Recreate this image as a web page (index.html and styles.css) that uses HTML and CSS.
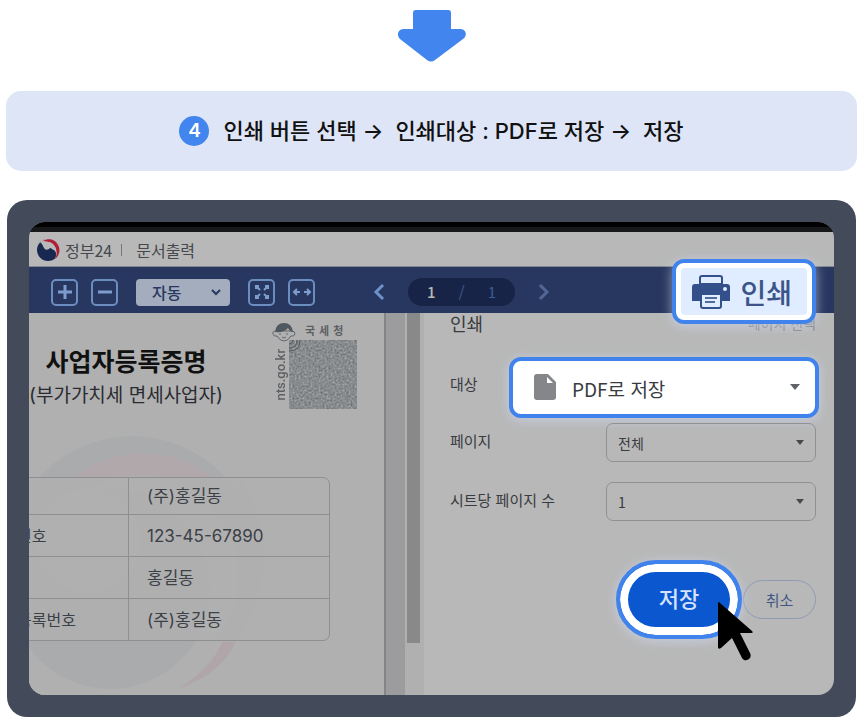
FILE: index.html
```html
<!DOCTYPE html>
<html lang="ko">
<head>
    <meta charset="UTF-8">
    <meta name="viewport" content="width=device-width, initial-scale=1.0">
    <title>정부24 문서출력 안내</title>
    <link rel="stylesheet" href="styles.css">
</head>
<body>
    <main class="guide">
        <svg class="down-arrow" width="68" height="52" viewBox="0 0 68 52" aria-hidden="true">
            <path d="M18 0h32q3 0 3 3v16h9c6 0 8 6 3 10L37 50q-4 3-8 0L2 29c-4-4-2-10 4-10h9V3q0-3 3-3z" fill="#4285ee"/>
        </svg>

        <!-- Step banner -->
        <div class="step">
            <span class="step-number">4</span>
            <p class="step-text">인쇄 버튼 선택 <span class="step-arrow">→</span> 인쇄대상 : PDF로 저장 <span class="step-arrow">→</span> 저장</p>
        </div>

        <div class="frame">
            <div class="screen">
                <div class="screen-bar"></div>
                <header class="site-header">
                    <svg width="24" height="24" viewBox="0 0 24 24" aria-hidden="true">
                        <circle cx="12" cy="12" r="11" fill="#182850"/>
                        <path d="M4 4C9-1 17 0 21 5c4 5 3 12-2 16 2-4 1-8-3-10-4-3-8-2-10-5z" fill="#b8b8b8"/>
                        <path d="M7 3c6-4 13-1 15 4 3 5 1 11-3 14 3-6 2-11-3-15-3-2-6-3-9-3z" fill="#b01d34"/>
                        <path d="M6 6c3-3 8-3 11 0 2 2 3 4 3 6-2-3-5-3-7-1-2 1-4 1-5-1-1-1-1-3-2-4z" fill="#b8b8b8"/>
                        <path d="M8 15c3 1 5-1 7-3 2-1 4 0 5 3-1 4-4 7-8 7z" fill="#182850"/>
                    </svg>
                    <span class="site-name">정부24</span>
                    <span class="site-divider"></span>
                    <span class="site-page">문서출력</span>
                </header>

                <!-- Viewer toolbar -->
                <div class="toolbar">
                    <button class="tool" aria-label="확대">
                        <svg width="26" height="26" viewBox="0 0 26 26"><path d="M13 6v14M6 13h14"/></svg>
                    </button>
                    <button class="tool" aria-label="축소">
                        <svg width="26" height="26" viewBox="0 0 26 26"><path d="M6 13h14"/></svg>
                    </button>
                    <div class="zoom">
                        <select class="zoom-select" aria-label="배율">
                            <option>자동</option>
                        </select>
                        <svg class="zoom-arrow" width="10" height="7" viewBox="0 0 10 7"><path d="M1 1l4 4 4-4" fill="none" stroke="#28375f" stroke-width="2"/></svg>
                    </div>
                    <button class="tool" aria-label="전체 화면">
                        <svg class="thin" width="26" height="26" viewBox="0 0 26 26"><path d="M7 10V7h3M7 7l4 4M16 7h3v3M19 7l-4 4M7 16v3h3M7 19l4-4M16 19h3v-3M19 19l-4-4"/></svg>
                    </button>
                    <button class="tool" aria-label="너비 맞춤">
                        <svg class="thin" width="26" height="26" viewBox="0 0 26 26"><path d="M8 10l-3 3 3 3M5 13h6M18 10l3 3-3 3M21 13h-6"/></svg>
                    </button>
                    <div class="pager">
                        <button class="pager-button" aria-label="이전 페이지">
                            <svg width="14" height="18" viewBox="0 0 14 18"><path d="M11 2L4 9l7 7" fill="none" stroke="#6d92c9" stroke-width="3"/></svg>
                        </button>
                        <div class="pager-pages"><b>1</b><span>/</span><span>1</span></div>
                        <button class="pager-button" aria-label="다음 페이지">
                            <svg width="14" height="18" viewBox="0 0 14 18"><path d="M3 2l7 7-7 7" fill="none" stroke="#526795" stroke-width="3"/></svg>
                        </button>
                    </div>
                    <button class="print-button">
                        <span class="print-inner">
                            <svg width="38" height="34" viewBox="0 0 38 34" aria-hidden="true">
                                <path d="M3 9h32q3 0 3 3v14H0V12q0-3 3-3z" fill="#34508a"/>
                                <path d="M8 9V3q0-2 2-2h18q2 0 2 2v6z" fill="#e0ecff" stroke="#34508a" stroke-width="2"/>
                                <path d="M9 19h20v12q0 2-2 2H11q-2 0-2-2z" fill="#e0ecff" stroke="#34508a" stroke-width="2"/>
                                <path d="M13 23h12M13 27h10" stroke="#526a9d" stroke-width="2"/>
                                <circle cx="33" cy="14" r="2" fill="#e0ecff"/>
                            </svg>
                            인쇄
                        </span>
                    </button>
                </div>

                <div class="viewer">
                    <!-- Document preview -->
                    <section class="document">
                        <svg class="watermark" viewBox="29 313 355 381" preserveAspectRatio="xMinYMin slice" aria-hidden="true">
                            <circle cx="132" cy="562" r="126" fill="#a9abad"/>
                            <circle cx="143" cy="569" r="116" fill="#b0a8aa"/>
                            <path d="M238 477a126 126 0 0 1 2 150z" fill="#a9abad"/>
                            <circle cx="138" cy="575" r="100" fill="#b0b0b0"/>
                            <path d="M29 640h260v54H29z" fill="#b0b0b0"/>
                            <circle cx="110" cy="588" r="100" fill="#a9abad"/>
                            <circle cx="88" cy="540" r="52" fill="#b0b0b0"/>
                            <path d="M178 688q44-16 57-47h-13q-12 27-44 47z" fill="#b0a5a8"/>
                        </svg>
                        <div class="document-head">
                            <div class="document-titles">
                                <h1 class="document-title">사업자등록증명</h1>
                                <p class="document-subtitle">(부가가치세 면세사업자)</p>
                            </div>
                            <div class="stamp">
                                <svg class="stamp-face" width="24" height="20" viewBox="0 0 24 20" aria-hidden="true">
                                    <path d="M4 9Q0 9 1 12q1 3 4 2 3 5 7 5t7-5q3 1 4-2 0-3-3-3z" fill="#b0b0b0" stroke="#60666b" stroke-width="1"/>
                                    <path d="M3 10Q4 1 12 1t9 9q-3 0-5-4-4 5-13 4z" fill="#515960"/>
                                    <path d="M8 11v2M15 11v2M10 15q2 2 4 0" fill="none" stroke="#60666b"/>
                                </svg>
                                <span class="stamp-name">국세청</span>
                                <span class="stamp-url">nts.go.kr</span>
                                <svg class="stamp-code" width="68" height="69" viewBox="0 0 68 69" aria-hidden="true">
                                    <filter id="grain" x="0" y="0" width="100%" height="100%" color-interpolation-filters="sRGB">
                                        <feTurbulence type="fractalNoise" baseFrequency="0.5" numOctaves="2" seed="4"/>
                                        <feColorMatrix values="0.35 0 0 0 0.36  0.35 0 0 0 0.37  0.35 0 0 0 0.38  0 0 0 0 1"/>
                                    </filter>
                                    <rect width="68" height="69" fill="#858789"/>
                                    <rect width="68" height="69" filter="url(#grain)"/>
                                    <path d="M4 0q0 4-4 4M8 0q0 8-8 8M11 0q0 11-11 11" fill="none" stroke="#55595d"/>
                                </svg>
                            </div>
                        </div>
                        <table class="document-table">
                            <tbody>
                                <tr><th></th><td>(주)홍길동</td></tr>
                                <tr><th>번호</th><td>123-45-67890</td></tr>
                                <tr><th></th><td>홍길동</td></tr>
                                <tr><th>등록번호</th><td>(주)홍길동</td></tr>
                            </tbody>
                        </table>
                    </section>
                    <div class="gutter"></div>
                    <div class="scrollbar"><div class="scrollbar-thumb"></div></div>

                    <!-- Print settings -->
                    <section class="settings">
                        <div class="settings-head">
                            <h2 class="settings-title">인쇄</h2>
                            <span class="settings-pages">페이지 선택</span>
                        </div>
                        <div class="field field-target">
                            <label for="target">대상</label>
                            <div class="control">
                                <svg class="file-icon" width="22" height="26" viewBox="0 0 22 26" aria-hidden="true">
                                    <path d="M3 0h11l8 8v15q0 3-3 3H3q-3 0-3-3V3q0-3 3-3z" fill="#84868a"/>
                                    <path d="M13 3l6 6h-6z" fill="#fff"/>
                                </svg>
                                <select id="target">
                                    <option>PDF로 저장</option>
                                </select>
                                <svg class="caret" width="10" height="6" viewBox="0 0 10 6"><path d="M0 0h10L5 6z" fill="#5f6368"/></svg>
                            </div>
                        </div>
                        <div class="field">
                            <label for="pages">페이지</label>
                            <div class="control">
                                <select id="pages">
                                    <option>전체</option>
                                </select>
                                <svg class="caret" width="8" height="5" viewBox="0 0 8 5"><path d="M0 0h8L4 5z" fill="#45484c"/></svg>
                            </div>
                        </div>
                        <div class="field">
                            <label for="per-sheet">시트당 페이지 수</label>
                            <div class="control">
                                <select id="per-sheet">
                                    <option>1</option>
                                </select>
                                <svg class="caret" width="8" height="5" viewBox="0 0 8 5"><path d="M0 0h8L4 5z" fill="#45484c"/></svg>
                            </div>
                        </div>
                        <div class="actions">
                            <div class="save">
                                <button class="save-button">저장</button>
                                <svg class="cursor" width="36" height="60" viewBox="0 0 36 60" aria-hidden="true">
                                    <path d="M0 1q0-2 2 0l32 28q2 2-1 2H22l10 20c3 6-5 10-8 5L14 36 3 46q-3 2-3-1z" fill="#000"/>
                                </svg>
                            </div>
                            <button class="cancel-button">취소</button>
                        </div>
                    </section>
                </div>
            </div>
        </div>
    </main>
</body>
</html>
```
FILE: styles.css
```css
* {
    box-sizing: border-box;
}
body {
    margin: 0;
    background-color: #fff;
    color: #111;
    font-family: "Noto Sans CJK KR", sans-serif;
}
h1, h2, p {
    margin: 0;
}
button, select {
    margin: 0;
    padding: 0;
    border: none;
    background: none;
    color: inherit;
    font-family: inherit;
    appearance: none;
    cursor: pointer;
}
svg {
    display: block;
    flex-shrink: 0;
}
.guide {
    padding: 10px 6px 5px;
}
.down-arrow {
    margin: 0 auto 29px;
}

/* Step banner */
.step {
    display: flex;
    justify-content: center;
    align-items: center;
    gap: 14px;
    min-height: 80px;
    margin-bottom: 29px;
    background-color: #dee5f7;
    border-radius: 15px;
}
.step-number {
    width: 30px;
    height: 30px;
    border-radius: 50%;
    background-color: #4285ee;
    color: #fff;
    font-family: Inter, sans-serif;
    font-size: 19px;
    font-weight: 600;
    line-height: 30px;
    text-align: center;
}
.step-text {
    font-family: Inter, "Noto Sans CJK KR", sans-serif;
    font-size: 22px;
    font-weight: 500;
    line-height: 30px;
}
.step-arrow {
    margin-right: 6px;
}

/* Device frame */
.frame {
    margin: 0 1px;
    padding: 22px;
    background-color: #434b5a;
    border-radius: 20px;
}
.screen {
    overflow: hidden;
    border-radius: 16px;
    background-color: #b8b8b8;
}
.screen-bar {
    height: 10px;
    border-bottom: 5px solid #17181a;
    background-color: #000;
}
.site-header {
    display: flex;
    align-items: center;
    height: 35px;
    padding: 2px 7px 0;
    border-bottom: 1px solid #85888f;
    color: #45484d;
    font-size: 16px;
    line-height: 24px;
}
.site-name {
    margin-left: 5px;
}
.site-divider {
    width: 1px;
    height: 12px;
    margin: 0 14px 0 9px;
    background-color: #777;
}

/* Viewer toolbar */
.toolbar {
    position: relative;
    display: flex;
    align-items: center;
    gap: 13px;
    height: 46px;
    padding: 4px 22px 0;
    background-color: #28375f;
}
.tool {
    width: 27px;
    height: 27px;
    border: 2px solid #6c8dc0;
    border-radius: 5px;
    display: flex;
    align-items: center;
    justify-content: center;
}
.tool path {
    fill: none;
    stroke: #7c9dce;
    stroke-width: 3;
}
.tool .thin path {
    stroke-width: 2;
}
.zoom {
    position: relative;
    margin: 0 5px;
}
.zoom-select {
    width: 94px;
    height: 27px;
    padding-left: 16px;
    border-radius: 4px;
    background-color: #a3adbd;
    color: #28375f;
    font-size: 16px;
    font-weight: 500;
    line-height: 24px;
}
.zoom-arrow {
    position: absolute;
    top: 10px;
    right: 9px;
    pointer-events: none;
}
.pager {
    display: flex;
    align-items: center;
    gap: 22px;
    margin-left: 44px;
}
.pager-pages {
    display: flex;
    justify-content: space-between;
    width: 107px;
    padding: 0 19px;
    border-radius: 14px;
    background-color: #182447;
    color: #3d5c96;
    font-size: 15px;
    line-height: 28px;
}
.pager-pages b {
    color: #b9b9b0;
    font-weight: 500;
}
.print-button {
    position: absolute;
    top: -8px;
    right: 18px;
    z-index: 2;
    padding: 5px;
    border: 4px solid #4083ed;
    border-radius: 12px;
    background-color: #fff;
    box-shadow: 0 2px 12px rgba(210, 222, 250, 0.6);
}
.print-inner {
    display: flex;
    align-items: center;
    gap: 10px;
    height: 47px;
    padding: 0 15px 0 11px;
    border-radius: 4px;
    background-color: #e0ecff;
    color: #3c5489;
    font-size: 28px;
    font-weight: 500;
    line-height: 40px;
}

/* Document preview */
.viewer {
    display: flex;
}
.document {
    position: relative;
    width: 355px;
    padding: 9px 0 54px;
    overflow: hidden;
    background-color: #b0b0b0;
    font-family: Inter, "Noto Sans CJK KR", sans-serif;
}
.watermark {
    position: absolute;
    top: 0;
    left: 0;
    width: 100%;
    height: 100%;
}
.document-head {
    position: relative;
    display: flex;
    justify-content: space-between;
    margin-bottom: 65px;
    padding-right: 27px;
}
.document-titles {
    padding-top: 22px;
    text-align: center;
    white-space: nowrap;
}
.document-title {
    font-size: 25px;
    font-weight: 700;
    line-height: 36px;
}
.document-subtitle {
    color: #292b30;
    font-size: 19px;
    line-height: 32px;
}
.stamp {
    display: grid;
    grid-template-columns: 17px 68px;
    grid-template-rows: 18px 69px;
    color: #5d6063;
}
.stamp-face {
    position: relative;
    z-index: 1;
}
.stamp-name {
    padding-left: 16px;
    font-size: 11px;
    font-weight: 700;
    line-height: 18px;
    letter-spacing: 4px;
}
.stamp-url {
    writing-mode: vertical-rl;
    transform: rotate(180deg);
    align-self: center;
    font-family: Roboto, sans-serif;
    font-size: 13px;
    font-weight: 500;
    line-height: 17px;
}
.document-table {
    position: relative;
    width: 325px;
    margin-left: -24px;
    border: 1px solid #8d8f93;
    border-radius: 7px;
    border-spacing: 0;
    background-color: rgba(176, 176, 176, 0.8);
    color: #3c4047;
}
.document-table th, .document-table td {
    height: 42px;
    padding: 0;
    text-align: left;
    font-weight: 400;
    line-height: 24px;
}
.document-table tr:first-child > * {
    height: 36px;
}
.document-table tr + tr > * {
    border-top: 1px solid #8d8f93;
}
.document-table th {
    width: 122px;
    padding-left: 11px;
    font-size: 16px;
}
.document-table td {
    padding-left: 18px;
    border-left: 1px solid #8d8f93;
    font-size: 17px;
}
.gutter {
    width: 21px;
    border-left: 2px solid #858587;
    background-color: #9c9c9f;
}
.scrollbar {
    width: 19px;
    padding: 0 4px 52px 2px;
    background-color: #b0b0b0;
}
.scrollbar-thumb {
    height: 100%;
    background-color: #898989;
}

/* Print settings */
.settings {
    flex: 1;
    padding: 0 18px 0 26px;
    color: #383b40;
    font-size: 15px;
    line-height: 22px;
}
.settings-head {
    display: flex;
    justify-content: space-between;
    margin-bottom: 24px;
}
.settings-title {
    font-size: 18px;
    font-weight: 400;
    line-height: 20px;
}
.settings-pages {
    color: #888;
    font-size: 14px;
    line-height: 20px;
}
.field {
    display: flex;
    justify-content: space-between;
    align-items: center;
    margin-bottom: 20px;
}
.field label {
    padding-bottom: 3px;
}
.control {
    position: relative;
}
.control select {
    width: 210px;
    height: 39px;
    padding-left: 11px;
    border: 1px solid #8f9194;
    border-radius: 7px;
    font-size: 14px;
}
.caret {
    position: absolute;
    top: 17px;
    right: 12px;
    pointer-events: none;
}
.field-target {
    margin-right: -3px;
    margin-bottom: 5px;
}
.field-target label {
    padding-bottom: 8px;
}
.field-target select {
    width: 310px;
    height: 61px;
    padding: 2px 0 0 59px;
    border: 4px solid #4083ed;
    border-radius: 12px;
    background-color: #fff;
    box-shadow: 0 2px 12px rgba(210, 222, 250, 0.6);
    font-size: 19px;
}
.field-target .caret {
    top: 27px;
    right: 19px;
}
.file-icon {
    position: absolute;
    top: 17px;
    left: 25px;
    pointer-events: none;
}
.actions {
    display: flex;
    justify-content: flex-end;
    align-items: center;
    gap: 1px;
    margin-top: 39px;
}
.save {
    position: relative;
}
.save-button {
    width: 126px;
    height: 79px;
    padding-bottom: 5px;
    border: 4px solid #4083ed;
    border-radius: 40px;
    background-color: #0b57d0;
    box-shadow: inset 0 0 0 8px #fff, 0 2px 12px rgba(210, 222, 250, 0.6);
    color: #d5e3ff;
    font-size: 22px;
    font-weight: 500;
}
.cursor {
    position: absolute;
    top: 42px;
    left: 102px;
    z-index: 1;
}
.cancel-button {
    width: 73px;
    height: 39px;
    border: 1px solid #8e9bb3;
    border-radius: 20px;
    color: #405783;
    font-size: 15px;
}
```
